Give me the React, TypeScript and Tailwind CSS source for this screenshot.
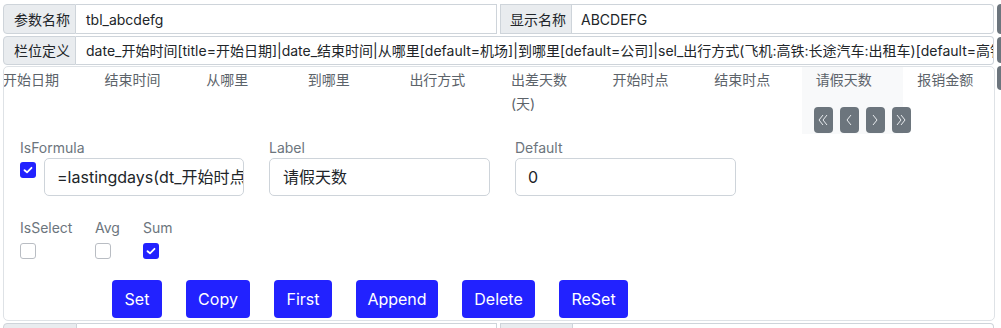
import React from "react";

const FONT = 'Inter, "Noto Sans CJK SC", sans-serif';

function Check({ checked }: { checked?: boolean }) {
  if (checked) {
    return (
      <div className="w-[16px] h-[16px] rounded-[3px] bg-[#2222ff] flex items-center justify-center">
        <svg width="10" height="8" viewBox="0 0 10 8">
          <polyline points="1.5,4.2 4,6.3 8.5,1.8" fill="none" stroke="white" strokeWidth="1.8" strokeLinecap="round" strokeLinejoin="round" />
        </svg>
      </div>
    );
  }
  return <div className="w-[16px] h-[16px] rounded-[3px] border border-[#b9bdc3] bg-white" />;
}

function NavBtn({ kind }: { kind: "first" | "prev" | "next" | "last" }) {
  const pts: Record<string, string[]> = {
    first: ["6,2 2,7 6,12", "10,2 6,7 10,12"],
    prev: ["7,2 3,7 7,12"],
    next: ["3,2 7,7 3,12"],
    last: ["2,2 6,7 2,12", "6,2 10,7 6,12"],
  };
  const w = kind === "first" || kind === "last" ? 12 : 10;
  return (
    <div className="w-[19px] h-[26px] rounded-[4px] bg-[#6c757d] flex items-center justify-center shrink-0">
      <svg width={w} height="14" viewBox={`0 0 ${w} 14`}>
        {pts[kind].map((p, i) => (
          <polyline key={i} points={p} fill="none" stroke="#e9ecef" strokeWidth="1" />
        ))}
      </svg>
    </div>
  );
}

const cols = ["开始日期", "结束时间", "从哪里", "到哪里", "出行方式", "出差天数", "开始时点", "结束时点", "请假天数", "报销金额"];

export default function App() {
  return (
    <div
      className="w-[1001px] h-[328px] overflow-hidden bg-white pt-[4px] pl-[3px] text-[14px] text-[#212529]"
      style={{ fontFamily: FONT }}
    >
      {/* Row 1 */}
      <div className="flex gap-[3px] h-[30px] w-[1100px]">
        <div className="flex w-[494px] shrink-0">
          <div className="w-[73px] shrink-0 bg-[#e9ecef] border border-[#ced4da] rounded-l-[4px] flex items-center pl-[10px]">参数名称</div>
          <div className="flex-1 border border-l-0 border-[#ced4da] flex items-center pl-[10px]">tbl_abcdefg</div>
        </div>
        <div className="flex w-[494px] shrink-0">
          <div className="w-[72px] shrink-0 bg-[#e9ecef] border border-[#ced4da] flex items-center pl-[9px]">显示名称</div>
          <div className="flex-1 border border-l-0 border-[#ced4da] rounded-r-[4px] flex items-center pl-[9px]">ABCDEFG</div>
        </div>
        <div className="w-[40px] shrink-0 rounded-[4px] bg-[#6c757d]" />
      </div>

      {/* Row 2 */}
      <div className="flex gap-[3px] h-[29px] mt-[2px] w-[1100px]">
        <div className="flex w-[991px] shrink-0">
          <div className="w-[73px] shrink-0 bg-[#e9ecef] border border-[#ced4da] rounded-l-[4px] flex items-center pl-[10px]">栏位定义</div>
          <div className="flex-1 min-w-0 border border-l-0 border-[#ced4da] rounded-r-[4px] flex items-center pl-[10px] overflow-hidden whitespace-nowrap">
            date_开始时间[title=开始日期]|date_结束时间|从哪里[default=机场]|到哪里[default=公司]|sel_出行方式(飞机:高铁:长途汽车:出租车)[default=高铁]
          </div>
        </div>
        <div className="w-[40px] h-[26px] mt-[1px] shrink-0 rounded-[4px] bg-[#6c757d]" />
      </div>

      {/* Row 3 */}
      <div className="flex gap-[2px] mt-[1px] w-[1100px]">
        <div className="w-[992px] h-[255px] shrink-0 border border-[#dee2e6] rounded-[5px] overflow-hidden">
          <div className="flex h-[67px] -ml-[15px] text-[#5c636a]">
            {cols.map((c, i) =>
              i === 8 ? (
                <div key={c} className="w-[101.6px] shrink-0 pl-[14px] pt-[1px] bg-[#f8f9fa] h-[67px]">
                  <div className="leading-[24px]">{c}</div>
                  <div className="flex gap-[7px] mt-[15px] -ml-[2px] w-[120px]">
                    <NavBtn kind="first" />
                    <NavBtn kind="prev" />
                    <NavBtn kind="next" />
                    <NavBtn kind="last" />
                  </div>
                </div>
              ) : (
                <div key={c} className="w-[101.6px] shrink-0 pl-[14px] pt-[1px] leading-[24px]">
                  {i === 5 ? (
                    <>
                      {c}
                      <br />
                      (天)
                    </>
                  ) : (
                    c
                  )}
                </div>
              )
            )}
          </div>

          <div className="pl-[16px] pt-[3px]">
            <div className="flex gap-[25px]">
              <div className="w-[224px]">
                <div className="h-[21px] leading-[21px] text-[#6c757d]">IsFormula</div>
                <div className="flex gap-[8px]">
                  <div className="mt-[4px]">
                    <Check checked />
                  </div>
                  <div className="w-[200px] h-[38px] border border-[#ced4da] rounded-[5px] px-[12px] flex items-center text-[16px] overflow-hidden whitespace-nowrap">
                    =lastingdays(dt_开始时点,dt_结束时点)
                  </div>
                </div>
              </div>
              <div className="w-[221px]">
                <div className="h-[21px] leading-[21px] text-[#6c757d]">Label</div>
                <div className="w-[221px] h-[38px] border border-[#ced4da] rounded-[5px] px-[13px] flex items-center text-[16px]">请假天数</div>
              </div>
              <div className="w-[221px]">
                <div className="h-[21px] leading-[21px] text-[#6c757d]">Default</div>
                <div className="w-[221px] h-[38px] border border-[#ced4da] rounded-[5px] px-[12px] flex items-center text-[16px]">0</div>
              </div>
            </div>

            <div className="flex mt-[21px]">
              <div className="w-[75px]">
                <div className="h-[21px] leading-[21px] text-[#6c757d]">IsSelect</div>
                <div className="mt-[5px]"><Check /></div>
              </div>
              <div className="w-[48px]">
                <div className="h-[21px] leading-[21px] text-[#6c757d]">Avg</div>
                <div className="mt-[5px]"><Check /></div>
              </div>
              <div className="w-[60px]">
                <div className="h-[21px] leading-[21px] text-[#6c757d]">Sum</div>
                <div className="mt-[5px]"><Check checked /></div>
              </div>
            </div>

            <div className="flex gap-[24px] mt-[21px] ml-[92px] text-[16px] text-white">
              <div className="w-[50px] h-[38px] rounded-[4px] bg-[#2222ff] flex items-center justify-center">Set</div>
              <div className="w-[64px] h-[38px] rounded-[4px] bg-[#2222ff] flex items-center justify-center">Copy</div>
              <div className="w-[58px] h-[38px] rounded-[4px] bg-[#2222ff] flex items-center justify-center">First</div>
              <div className="w-[82px] h-[38px] rounded-[4px] bg-[#2222ff] flex items-center justify-center">Append</div>
              <div className="w-[73px] h-[38px] rounded-[4px] bg-[#2222ff] flex items-center justify-center">Delete</div>
              <div className="w-[69px] h-[38px] rounded-[4px] bg-[#2222ff] flex items-center justify-center">ReSet</div>
            </div>
          </div>
        </div>
        <div className="w-[40px] h-[24px] shrink-0 rounded-[4px] bg-[#6c757d]" />
      </div>

      {/* Row 4 (cut off) */}
      <div className="flex h-[30px] mt-[2px] w-[1100px]">
        <div className="flex w-[494px] shrink-0 mr-[3px]">
          <div className="w-[74px] shrink-0 bg-[#e9ecef] border border-[#ced4da] rounded-tl-[4px]" />
          <div className="flex-1 border border-l-0 border-[#ced4da]" />
        </div>
        <div className="flex w-[494px] shrink-0">
          <div className="w-[73px] shrink-0 bg-[#e9ecef] border border-[#ced4da]" />
          <div className="flex-1 border border-l-0 border-[#ced4da] rounded-tr-[4px]" />
        </div>
      </div>
    </div>
  );
}
